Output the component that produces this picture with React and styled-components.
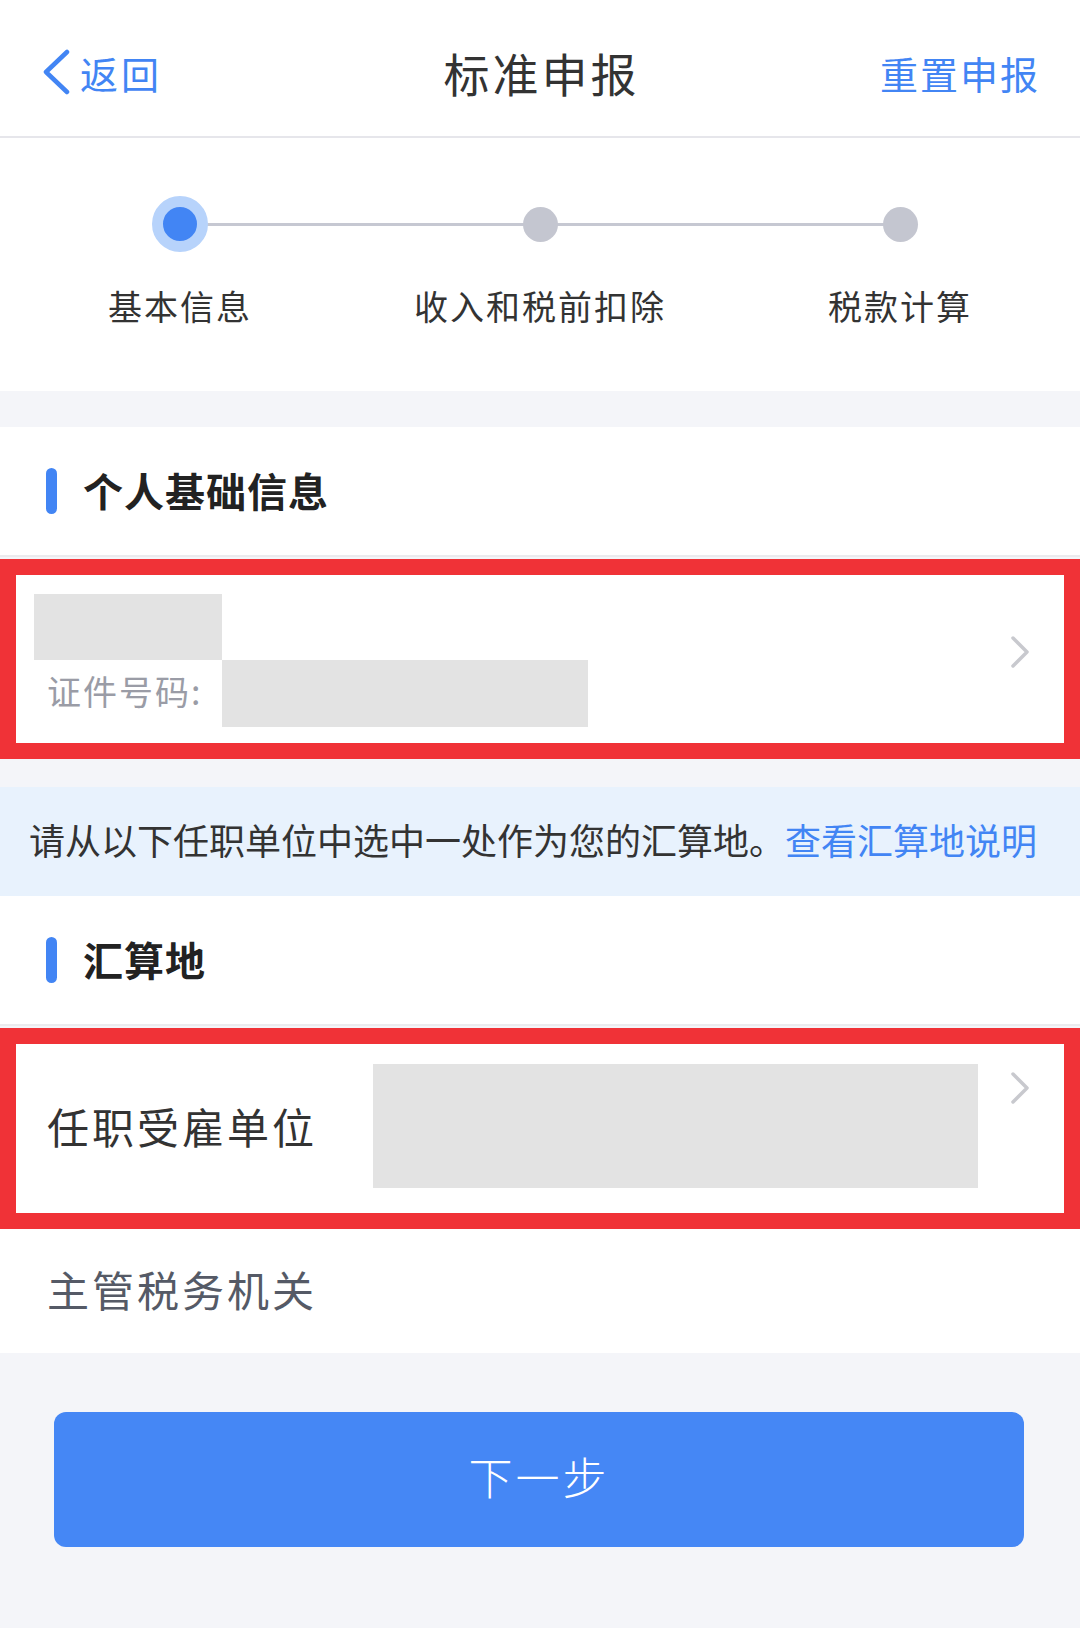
import React from 'react';
import styled, { createGlobalStyle } from 'styled-components';

const GlobalStyle = createGlobalStyle`
  html, body {
    margin: 0;
    padding: 0;
    background: #f4f5f9;
  }
  body {
    font-family: "Noto Sans CJK SC", "Noto Sans", sans-serif;
    color: #333;
  }
`;

const steps = ['基本信息', '收入和税前扣除', '税款计算'];

const BackIcon = () => (
  <svg width="28" height="46" viewBox="0 0 28 46">
    <polyline points="24,3 3,23 24,43" fill="none" stroke="#4285f4" strokeWidth="4.5" strokeLinecap="round" strokeLinejoin="round" />
  </svg>
);

const Chevron = () => (
  <svg width="22" height="32" viewBox="0 0 22 32">
    <polyline points="3,2 17,16 3,30" fill="none" stroke="#c8c9ce" strokeWidth="3.5" strokeLinecap="round" strokeLinejoin="round" />
  </svg>
);

export default function App() {
  return (
    <Page>
      <GlobalStyle />
      <Header>
        <BackLink>
          <BackIcon />
          <span>返回</span>
        </BackLink>
        <Title>标准申报</Title>
        <ResetLink>重置申报</ResetLink>
      </Header>

      <StepsPanel>
        {steps.map((label, i) => (
          <Step key={label} last={i === steps.length - 1}>
            <DotRow>
              {i === 0 ? <ActiveDot /> : <Dot />}
            </DotRow>
            <StepLabel>{label}</StepLabel>
          </Step>
        ))}
      </StepsPanel>

      <Gap />

      <SectionHead>
        <Bar />
        <SectionTitle>个人基础信息</SectionTitle>
      </SectionHead>

      <Marked>
        <IdentityRow>
          <IdentityCol>
            <NameMask />
            <IdLine>
              <IdLabel>证件号码:</IdLabel>
              <IdMask />
            </IdLine>
          </IdentityCol>
          <ChevronWrap>
            <Chevron />
          </ChevronWrap>
        </IdentityRow>
      </Marked>

      <Gap small />

      <Notice>
        请从以下任职单位中选中一处作为您的汇算地。<NoticeLink>查看汇算地说明</NoticeLink>
      </Notice>

      <SectionHead>
        <Bar />
        <SectionTitle>汇算地</SectionTitle>
      </SectionHead>

      <Marked>
        <EmployerRow>
          <FieldLabel>任职受雇单位</FieldLabel>
          <EmployerMask />
          <ChevronTop>
            <Chevron />
          </ChevronTop>
        </EmployerRow>
      </Marked>

      <PlainRow>
        <FieldLabel muted>主管税务机关</FieldLabel>
      </PlainRow>

      <Footer>
        <NextButton>下一步</NextButton>
      </Footer>
    </Page>
  );
}

const Page = styled.div`
  width: 1080px;
  min-height: 1628px;
  background: #f4f5f9;
`;

const Header = styled.header`
  height: 128px;
  padding-top: 8px;
  background: #fff;
  border-bottom: 2px solid #e6e6eb;
  display: grid;
  grid-template-columns: 1fr auto 1fr;
  align-items: center;
`;

const BackLink = styled.div`
  display: flex;
  align-items: center;
  gap: 9px;
  padding-left: 43px;
  color: #4285f4;
  font-size: 38px;
  letter-spacing: 3px;
`;

const Title = styled.div`
  font-size: 46px;
  letter-spacing: 3px;
  color: #333;
  margin-right: -3px;
`;

const ResetLink = styled.div`
  justify-self: end;
  padding-right: 40px;
  color: #4285f4;
  font-size: 38px;
  letter-spacing: 2px;
`;

const StepsPanel = styled.section`
  background: #fff;
  display: grid;
  grid-template-columns: repeat(3, 1fr);
  padding: 58px 0 61px;
`;

const Step = styled.div`
  position: relative;
  display: flex;
  flex-direction: column;
  align-items: center;

  &::after {
    content: '';
    display: ${p => (p.last ? 'none' : 'block')};
    position: absolute;
    top: 27px;
    left: 50%;
    width: 100%;
    height: 3px;
    background: #c6c8d2;
  }
`;

const DotRow = styled.div`
  height: 56px;
  display: flex;
  align-items: center;
  position: relative;
  z-index: 1;
`;

const ActiveDot = styled.span`
  width: 34px;
  height: 34px;
  border-radius: 50%;
  background: #4285f4;
  border: 11px solid #b7d3fb;
`;

const Dot = styled.span`
  width: 35px;
  height: 35px;
  border-radius: 50%;
  background: #c4c6d0;
`;

const StepLabel = styled.div`
  margin-top: 30px;
  font-size: 34px;
  line-height: 48px;
  letter-spacing: 2px;
  color: #333;
`;

const Gap = styled.div`
  height: ${p => (p.small ? '28px' : '36px')};
`;

const SectionHead = styled.div`
  height: 128px;
  background: #fff;
  border-bottom: 2px solid #ebebee;
  display: flex;
  align-items: center;
  padding-left: 46px;
  gap: 26px;
`;

const Bar = styled.span`
  width: 11px;
  height: 46px;
  border-radius: 6px;
  background: #4285f4;
`;

const SectionTitle = styled.h2`
  margin: 0 0 3px;
  font-size: 40px;
  font-weight: 700;
  letter-spacing: 1px;
  color: #222;
`;

const Marked = styled.div`
  margin-top: 2px;
  border: 16px solid #f03237;
  background: #fff;
`;

const IdentityRow = styled.div`
  height: 168px;
  display: flex;
  align-items: center;
  justify-content: space-between;
  padding: 0 32px 0 18px;
`;

const IdentityCol = styled.div`
  display: flex;
  flex-direction: column;
  margin-top: 2px;
`;

const NameMask = styled.div`
  width: 188px;
  height: 66px;
  background: #e3e3e3;
`;

const IdLine = styled.div`
  display: flex;
  align-items: center;
`;

const IdLabel = styled.span`
  width: 175px;
  padding: 0 0 6px 13px;
  font-size: 34px;
  letter-spacing: 2px;
  color: #9a9ca6;
`;

const IdMask = styled.div`
  width: 366px;
  height: 67px;
  background: #e3e3e3;
`;

const ChevronWrap = styled.div`
  display: flex;
  margin-top: -14px;
`;

const Notice = styled.div`
  height: 103px;
  padding: 0 0 6px 29px;
  background: #e8f2fd;
  display: flex;
  align-items: center;
  font-size: 36px;
  color: #333;
  white-space: nowrap;
`;

const NoticeLink = styled.span`
  color: #4285f4;
`;

const EmployerRow = styled.div`
  height: 169px;
  display: flex;
  align-items: center;
  padding: 0 32px 0 31px;
`;

const FieldLabel = styled.span`
  width: 326px;
  padding-bottom: 6px;
  font-size: 42px;
  letter-spacing: 3px;
  color: ${p => (p.muted ? '#555a66' : '#333')};
`;

const EmployerMask = styled.div`
  width: 605px;
  height: 124px;
  background: #e3e3e3;
  margin-top: -6px;
`;

const ChevronTop = styled.div`
  display: flex;
  align-self: flex-start;
  margin: 28px 0 0 auto;
`;

const PlainRow = styled.div`
  height: 124px;
  background: #fff;
  display: flex;
  align-items: center;
  padding-left: 47px;
`;

const Footer = styled.div`
  padding: 59px 56px 80px 54px;
`;

const NextButton = styled.button`
  width: 100%;
  height: 135px;
  padding-bottom: 8px;
  border: none;
  border-radius: 12px;
  background: #4587f5;
  color: #fff;
  font-family: "Noto Sans CJK SC", "Noto Sans", sans-serif;
  font-size: 44px;
  font-weight: 300;
  letter-spacing: 3px;
`;
